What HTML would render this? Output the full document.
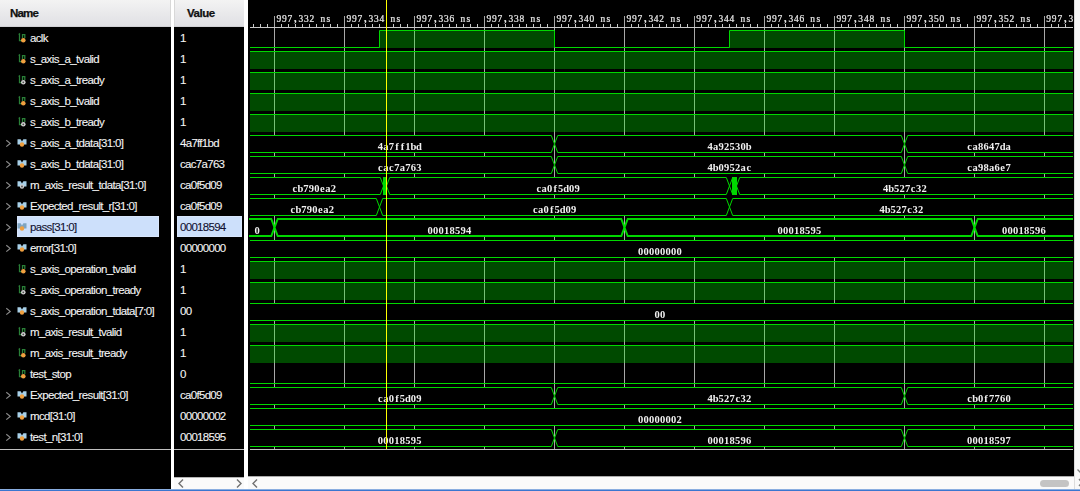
<!DOCTYPE html>
<html><head><meta charset="utf-8"><style>
html,body{margin:0;padding:0;}
body{width:1080px;height:491px;background:#000;position:relative;overflow:hidden;font-family:"Liberation Sans",sans-serif;}
.abs{position:absolute;}
.hdr{position:absolute;top:0;height:26px;background:linear-gradient(#f3f3f3,#e0e0e4);border-bottom:1px solid #d0d0d4;}
.hdr span{position:absolute;top:7px;font-weight:bold;font-size:11.5px;letter-spacing:-0.5px;color:#101010;-webkit-text-stroke:0.25px #101010;}
.sep{position:absolute;top:0;}
.nm{position:absolute;left:30px;height:21px;line-height:21px;font-size:11.5px;letter-spacing:-0.64px;color:#f4f4f4;white-space:nowrap;-webkit-text-stroke:0.1px #f4f4f4;}
.nm.sel{color:#101030;-webkit-text-stroke:0.1px #101030;}
.vl{position:absolute;left:180px;height:21px;line-height:21px;font-size:11.5px;letter-spacing:-0.7px;color:#f4f4f4;white-space:nowrap;-webkit-text-stroke:0.1px #f4f4f4;}
.vl.vsel{color:#101030;-webkit-text-stroke:0.1px #101030;}
.ic{position:absolute;}
.sbox{position:absolute;background:#cde0fb;box-sizing:border-box;border:1px solid #d8e6fc;}
svg.wave{position:absolute;left:0;top:0;will-change:transform;}
.tl{font-family:"Liberation Serif",serif;font-size:10.5px;fill:#e8e8e8;stroke:#e8e8e8;stroke-width:0.25px;}
.tlc{font-family:"Liberation Serif",serif;font-weight:bold;font-size:12px;fill:#e8e8e8;}
.bv{font-family:"Liberation Serif",serif;font-weight:bold;font-size:10.5px;fill:#f0f0f0;}
.scroll{position:absolute;background:#f5f5f5;}
.arr{position:absolute;}
</style></head><body>
<div class="hdr" style="left:0;width:171px;box-shadow:inset -1px 0 0 #d8d8d8"><span style="left:10px;letter-spacing:-0.8px">Name</span></div>
<div class="hdr" style="left:174px;width:70px;box-shadow:inset 1px 0 0 #d8d8d8"><span style="left:13px">Value</span></div>
<div class="sep" style="left:171px;width:3px;height:489px;background:#fff"></div>
<div class="sep" style="left:244px;width:4px;height:489px;background:#fff"></div>
<div class="sbox" style="left:17px;top:216px;width:142px;height:21px"></div><div class="sbox" style="left:177px;top:216px;width:65px;height:21px"></div>
<svg class="ic" style="left:16px;top:31px" width="12" height="12" viewBox="0 0 12 12"><path d="M2.6,3.6 L3.5,3 V9.5 H5.5 M6.5,7 V3.5 H8.8 V7" stroke="#2a8038" stroke-width="1.25" fill="none"/><circle cx="7.3" cy="9.3" r="2.3" fill="#f0a040"/></svg><div class="nm" style="top:28px">aclk</div><svg class="ic" style="left:16px;top:52px" width="12" height="12" viewBox="0 0 12 12"><path d="M2.6,3.6 L3.5,3 V9.5 H5.5 M6.5,7 V3.5 H8.8 V7" stroke="#2a8038" stroke-width="1.25" fill="none"/><circle cx="7.3" cy="9.3" r="2.3" fill="#f0a040"/></svg><div class="nm" style="top:49px">s_axis_a_tvalid</div><svg class="ic" style="left:16px;top:73px" width="12" height="12" viewBox="0 0 12 12"><path d="M2.6,3.6 L3.5,3 V9.5 H5.5 M6.5,7 V3.5 H8.8 V7" stroke="#2a8038" stroke-width="1.25" fill="none"/><circle cx="7.3" cy="9.3" r="2.3" fill="#d0d0d0"/><circle cx="7.3" cy="9.3" r="0.9" fill="#505050"/></svg><div class="nm" style="top:70px">s_axis_a_tready</div><svg class="ic" style="left:16px;top:94px" width="12" height="12" viewBox="0 0 12 12"><path d="M2.6,3.6 L3.5,3 V9.5 H5.5 M6.5,7 V3.5 H8.8 V7" stroke="#2a8038" stroke-width="1.25" fill="none"/><circle cx="7.3" cy="9.3" r="2.3" fill="#f0a040"/></svg><div class="nm" style="top:91px">s_axis_b_tvalid</div><svg class="ic" style="left:16px;top:115px" width="12" height="12" viewBox="0 0 12 12"><path d="M2.6,3.6 L3.5,3 V9.5 H5.5 M6.5,7 V3.5 H8.8 V7" stroke="#2a8038" stroke-width="1.25" fill="none"/><circle cx="7.3" cy="9.3" r="2.3" fill="#d0d0d0"/><circle cx="7.3" cy="9.3" r="0.9" fill="#505050"/></svg><div class="nm" style="top:112px">s_axis_b_tready</div><svg class="ic" style="left:16px;top:139px" width="12" height="9" viewBox="0 0 12 9"><path d="M1.5,0.3 H4.6 L6,2.6 L7.4,0.3 H10.5 V5.6 H1.5 Z" fill="#a8d0e8"/><circle cx="6" cy="5.5" r="2.2" fill="#f0a040"/></svg><svg class="ic" style="left:4px;top:139px" width="8" height="9" viewBox="0 0 8 9"><path d="M2.3,1.2 L6.2,4.4 L2.3,7.6" stroke="#8a8a8a" stroke-width="1.2" fill="none"/></svg><div class="nm" style="top:133px">s_axis_a_tdata[31:0]</div><svg class="ic" style="left:16px;top:160px" width="12" height="9" viewBox="0 0 12 9"><path d="M1.5,0.3 H4.6 L6,2.6 L7.4,0.3 H10.5 V5.6 H1.5 Z" fill="#a8d0e8"/><circle cx="6" cy="5.5" r="2.2" fill="#f0a040"/></svg><svg class="ic" style="left:4px;top:160px" width="8" height="9" viewBox="0 0 8 9"><path d="M2.3,1.2 L6.2,4.4 L2.3,7.6" stroke="#8a8a8a" stroke-width="1.2" fill="none"/></svg><div class="nm" style="top:154px">s_axis_b_tdata[31:0]</div><svg class="ic" style="left:16px;top:181px" width="12" height="9" viewBox="0 0 12 9"><path d="M1.5,0.3 H4.6 L6,2.6 L7.4,0.3 H10.5 V5.6 H1.5 Z" fill="#a8d0e8"/><circle cx="6" cy="5.5" r="2.2" fill="#d0d0d0"/><circle cx="6" cy="5.5" r="0.9" fill="#505050"/></svg><svg class="ic" style="left:4px;top:181px" width="8" height="9" viewBox="0 0 8 9"><path d="M2.3,1.2 L6.2,4.4 L2.3,7.6" stroke="#8a8a8a" stroke-width="1.2" fill="none"/></svg><div class="nm" style="top:175px">m_axis_result_tdata[31:0]</div><svg class="ic" style="left:16px;top:202px" width="12" height="9" viewBox="0 0 12 9"><path d="M1.5,0.3 H4.6 L6,2.6 L7.4,0.3 H10.5 V5.6 H1.5 Z" fill="#a8d0e8"/><circle cx="6" cy="5.5" r="2.2" fill="#f0a040"/></svg><svg class="ic" style="left:4px;top:202px" width="8" height="9" viewBox="0 0 8 9"><path d="M2.3,1.2 L6.2,4.4 L2.3,7.6" stroke="#8a8a8a" stroke-width="1.2" fill="none"/></svg><div class="nm" style="top:196px">Expected_result_r[31:0]</div><svg class="ic" style="left:16px;top:223px" width="12" height="9" viewBox="0 0 12 9"><path d="M1.5,0.3 H4.6 L6,2.6 L7.4,0.3 H10.5 V5.6 H1.5 Z" fill="#7ea4c0"/><circle cx="6" cy="5.5" r="2.2" fill="#f0a040"/></svg><svg class="ic" style="left:4px;top:223px" width="8" height="9" viewBox="0 0 8 9"><path d="M2.3,1.2 L6.2,4.4 L2.3,7.6" stroke="#8a8a8a" stroke-width="1.2" fill="none"/></svg><div class="nm sel" style="top:217px">pass[31:0]</div><svg class="ic" style="left:16px;top:244px" width="12" height="9" viewBox="0 0 12 9"><path d="M1.5,0.3 H4.6 L6,2.6 L7.4,0.3 H10.5 V5.6 H1.5 Z" fill="#a8d0e8"/><circle cx="6" cy="5.5" r="2.2" fill="#f0a040"/></svg><svg class="ic" style="left:4px;top:244px" width="8" height="9" viewBox="0 0 8 9"><path d="M2.3,1.2 L6.2,4.4 L2.3,7.6" stroke="#8a8a8a" stroke-width="1.2" fill="none"/></svg><div class="nm" style="top:238px">error[31:0]</div><svg class="ic" style="left:16px;top:262px" width="12" height="12" viewBox="0 0 12 12"><path d="M2.6,3.6 L3.5,3 V9.5 H5.5 M6.5,7 V3.5 H8.8 V7" stroke="#2a8038" stroke-width="1.25" fill="none"/><circle cx="7.3" cy="9.3" r="2.3" fill="#f0a040"/></svg><div class="nm" style="top:259px">s_axis_operation_tvalid</div><svg class="ic" style="left:16px;top:283px" width="12" height="12" viewBox="0 0 12 12"><path d="M2.6,3.6 L3.5,3 V9.5 H5.5 M6.5,7 V3.5 H8.8 V7" stroke="#2a8038" stroke-width="1.25" fill="none"/><circle cx="7.3" cy="9.3" r="2.3" fill="#d0d0d0"/><circle cx="7.3" cy="9.3" r="0.9" fill="#505050"/></svg><div class="nm" style="top:280px">s_axis_operation_tready</div><svg class="ic" style="left:16px;top:307px" width="12" height="9" viewBox="0 0 12 9"><path d="M1.5,0.3 H4.6 L6,2.6 L7.4,0.3 H10.5 V5.6 H1.5 Z" fill="#a8d0e8"/><circle cx="6" cy="5.5" r="2.2" fill="#f0a040"/></svg><svg class="ic" style="left:4px;top:307px" width="8" height="9" viewBox="0 0 8 9"><path d="M2.3,1.2 L6.2,4.4 L2.3,7.6" stroke="#8a8a8a" stroke-width="1.2" fill="none"/></svg><div class="nm" style="top:301px">s_axis_operation_tdata[7:0]</div><svg class="ic" style="left:16px;top:325px" width="12" height="12" viewBox="0 0 12 12"><path d="M2.6,3.6 L3.5,3 V9.5 H5.5 M6.5,7 V3.5 H8.8 V7" stroke="#2a8038" stroke-width="1.25" fill="none"/><circle cx="7.3" cy="9.3" r="2.3" fill="#d0d0d0"/><circle cx="7.3" cy="9.3" r="0.9" fill="#505050"/></svg><div class="nm" style="top:322px">m_axis_result_tvalid</div><svg class="ic" style="left:16px;top:346px" width="12" height="12" viewBox="0 0 12 12"><path d="M2.6,3.6 L3.5,3 V9.5 H5.5 M6.5,7 V3.5 H8.8 V7" stroke="#2a8038" stroke-width="1.25" fill="none"/><circle cx="7.3" cy="9.3" r="2.3" fill="#f0a040"/></svg><div class="nm" style="top:343px">m_axis_result_tready</div><svg class="ic" style="left:16px;top:367px" width="12" height="12" viewBox="0 0 12 12"><path d="M2.6,3.6 L3.5,3 V9.5 H5.5 M6.5,7 V3.5 H8.8 V7" stroke="#2a8038" stroke-width="1.25" fill="none"/><circle cx="7.3" cy="9.3" r="2.3" fill="#f0a040"/></svg><div class="nm" style="top:364px">test_stop</div><svg class="ic" style="left:16px;top:391px" width="12" height="9" viewBox="0 0 12 9"><path d="M1.5,0.3 H4.6 L6,2.6 L7.4,0.3 H10.5 V5.6 H1.5 Z" fill="#a8d0e8"/><circle cx="6" cy="5.5" r="2.2" fill="#f0a040"/></svg><svg class="ic" style="left:4px;top:391px" width="8" height="9" viewBox="0 0 8 9"><path d="M2.3,1.2 L6.2,4.4 L2.3,7.6" stroke="#8a8a8a" stroke-width="1.2" fill="none"/></svg><div class="nm" style="top:385px">Expected_result[31:0]</div><svg class="ic" style="left:16px;top:412px" width="12" height="9" viewBox="0 0 12 9"><path d="M1.5,0.3 H4.6 L6,2.6 L7.4,0.3 H10.5 V5.6 H1.5 Z" fill="#a8d0e8"/><circle cx="6" cy="5.5" r="2.2" fill="#f0a040"/></svg><svg class="ic" style="left:4px;top:412px" width="8" height="9" viewBox="0 0 8 9"><path d="M2.3,1.2 L6.2,4.4 L2.3,7.6" stroke="#8a8a8a" stroke-width="1.2" fill="none"/></svg><div class="nm" style="top:406px">mcd[31:0]</div><svg class="ic" style="left:16px;top:433px" width="12" height="9" viewBox="0 0 12 9"><path d="M1.5,0.3 H4.6 L6,2.6 L7.4,0.3 H10.5 V5.6 H1.5 Z" fill="#a8d0e8"/><circle cx="6" cy="5.5" r="2.2" fill="#f0a040"/></svg><svg class="ic" style="left:4px;top:433px" width="8" height="9" viewBox="0 0 8 9"><path d="M2.3,1.2 L6.2,4.4 L2.3,7.6" stroke="#8a8a8a" stroke-width="1.2" fill="none"/></svg><div class="nm" style="top:427px">test_n[31:0]</div>
<div class="vl" style="top:28px">1</div><div class="vl" style="top:49px">1</div><div class="vl" style="top:70px">1</div><div class="vl" style="top:91px">1</div><div class="vl" style="top:112px">1</div><div class="vl" style="top:133px">4a7ff1bd</div><div class="vl" style="top:154px">cac7a763</div><div class="vl" style="top:175px">ca0f5d09</div><div class="vl" style="top:196px">ca0f5d09</div><div class="vl vsel" style="top:217px">00018594</div><div class="vl" style="top:238px">00000000</div><div class="vl" style="top:259px">1</div><div class="vl" style="top:280px">1</div><div class="vl" style="top:301px">00</div><div class="vl" style="top:322px">1</div><div class="vl" style="top:343px">1</div><div class="vl" style="top:364px">0</div><div class="vl" style="top:385px">ca0f5d09</div><div class="vl" style="top:406px">00000002</div><div class="vl" style="top:427px">00018595</div>
<svg class="wave" width="1080" height="491" viewBox="0 0 1080 491">
<rect x="274" y="16" width="1" height="434" fill="#a8a8a8"/><rect x="344" y="16" width="1" height="434" fill="#a8a8a8"/><rect x="414" y="16" width="1" height="434" fill="#a8a8a8"/><rect x="484" y="16" width="1" height="434" fill="#a8a8a8"/><rect x="554" y="16" width="1" height="434" fill="#a8a8a8"/><rect x="624" y="16" width="1" height="434" fill="#a8a8a8"/><rect x="694" y="16" width="1" height="434" fill="#a8a8a8"/><rect x="764" y="16" width="1" height="434" fill="#a8a8a8"/><rect x="834" y="16" width="1" height="434" fill="#a8a8a8"/><rect x="904" y="16" width="1" height="434" fill="#a8a8a8"/><rect x="974" y="16" width="1" height="434" fill="#a8a8a8"/><rect x="1044" y="16" width="1" height="434" fill="#a8a8a8"/><rect x="250" y="27" width="823" height="1" fill="#c8c8c8"/><rect x="253" y="24" width="1" height="3" fill="#c8c8c8"/><rect x="260" y="24" width="1" height="3" fill="#c8c8c8"/><rect x="267" y="24" width="1" height="3" fill="#c8c8c8"/><rect x="281" y="24" width="1" height="3" fill="#c8c8c8"/><rect x="288" y="24" width="1" height="3" fill="#c8c8c8"/><rect x="295" y="24" width="1" height="3" fill="#c8c8c8"/><rect x="302" y="24" width="1" height="3" fill="#c8c8c8"/><rect x="309" y="24" width="1" height="3" fill="#c8c8c8"/><rect x="316" y="24" width="1" height="3" fill="#c8c8c8"/><rect x="323" y="24" width="1" height="3" fill="#c8c8c8"/><rect x="330" y="24" width="1" height="3" fill="#c8c8c8"/><rect x="337" y="24" width="1" height="3" fill="#c8c8c8"/><rect x="351" y="24" width="1" height="3" fill="#c8c8c8"/><rect x="358" y="24" width="1" height="3" fill="#c8c8c8"/><rect x="365" y="24" width="1" height="3" fill="#c8c8c8"/><rect x="372" y="24" width="1" height="3" fill="#c8c8c8"/><rect x="379" y="24" width="1" height="3" fill="#c8c8c8"/><rect x="386" y="24" width="1" height="3" fill="#c8c8c8"/><rect x="393" y="24" width="1" height="3" fill="#c8c8c8"/><rect x="400" y="24" width="1" height="3" fill="#c8c8c8"/><rect x="407" y="24" width="1" height="3" fill="#c8c8c8"/><rect x="421" y="24" width="1" height="3" fill="#c8c8c8"/><rect x="428" y="24" width="1" height="3" fill="#c8c8c8"/><rect x="435" y="24" width="1" height="3" fill="#c8c8c8"/><rect x="442" y="24" width="1" height="3" fill="#c8c8c8"/><rect x="449" y="24" width="1" height="3" fill="#c8c8c8"/><rect x="456" y="24" width="1" height="3" fill="#c8c8c8"/><rect x="463" y="24" width="1" height="3" fill="#c8c8c8"/><rect x="470" y="24" width="1" height="3" fill="#c8c8c8"/><rect x="477" y="24" width="1" height="3" fill="#c8c8c8"/><rect x="491" y="24" width="1" height="3" fill="#c8c8c8"/><rect x="498" y="24" width="1" height="3" fill="#c8c8c8"/><rect x="505" y="24" width="1" height="3" fill="#c8c8c8"/><rect x="512" y="24" width="1" height="3" fill="#c8c8c8"/><rect x="519" y="24" width="1" height="3" fill="#c8c8c8"/><rect x="526" y="24" width="1" height="3" fill="#c8c8c8"/><rect x="533" y="24" width="1" height="3" fill="#c8c8c8"/><rect x="540" y="24" width="1" height="3" fill="#c8c8c8"/><rect x="547" y="24" width="1" height="3" fill="#c8c8c8"/><rect x="561" y="24" width="1" height="3" fill="#c8c8c8"/><rect x="568" y="24" width="1" height="3" fill="#c8c8c8"/><rect x="575" y="24" width="1" height="3" fill="#c8c8c8"/><rect x="582" y="24" width="1" height="3" fill="#c8c8c8"/><rect x="589" y="24" width="1" height="3" fill="#c8c8c8"/><rect x="596" y="24" width="1" height="3" fill="#c8c8c8"/><rect x="603" y="24" width="1" height="3" fill="#c8c8c8"/><rect x="610" y="24" width="1" height="3" fill="#c8c8c8"/><rect x="617" y="24" width="1" height="3" fill="#c8c8c8"/><rect x="631" y="24" width="1" height="3" fill="#c8c8c8"/><rect x="638" y="24" width="1" height="3" fill="#c8c8c8"/><rect x="645" y="24" width="1" height="3" fill="#c8c8c8"/><rect x="652" y="24" width="1" height="3" fill="#c8c8c8"/><rect x="659" y="24" width="1" height="3" fill="#c8c8c8"/><rect x="666" y="24" width="1" height="3" fill="#c8c8c8"/><rect x="673" y="24" width="1" height="3" fill="#c8c8c8"/><rect x="680" y="24" width="1" height="3" fill="#c8c8c8"/><rect x="687" y="24" width="1" height="3" fill="#c8c8c8"/><rect x="701" y="24" width="1" height="3" fill="#c8c8c8"/><rect x="708" y="24" width="1" height="3" fill="#c8c8c8"/><rect x="715" y="24" width="1" height="3" fill="#c8c8c8"/><rect x="722" y="24" width="1" height="3" fill="#c8c8c8"/><rect x="729" y="24" width="1" height="3" fill="#c8c8c8"/><rect x="736" y="24" width="1" height="3" fill="#c8c8c8"/><rect x="743" y="24" width="1" height="3" fill="#c8c8c8"/><rect x="750" y="24" width="1" height="3" fill="#c8c8c8"/><rect x="757" y="24" width="1" height="3" fill="#c8c8c8"/><rect x="771" y="24" width="1" height="3" fill="#c8c8c8"/><rect x="778" y="24" width="1" height="3" fill="#c8c8c8"/><rect x="785" y="24" width="1" height="3" fill="#c8c8c8"/><rect x="792" y="24" width="1" height="3" fill="#c8c8c8"/><rect x="799" y="24" width="1" height="3" fill="#c8c8c8"/><rect x="806" y="24" width="1" height="3" fill="#c8c8c8"/><rect x="813" y="24" width="1" height="3" fill="#c8c8c8"/><rect x="820" y="24" width="1" height="3" fill="#c8c8c8"/><rect x="827" y="24" width="1" height="3" fill="#c8c8c8"/><rect x="841" y="24" width="1" height="3" fill="#c8c8c8"/><rect x="848" y="24" width="1" height="3" fill="#c8c8c8"/><rect x="855" y="24" width="1" height="3" fill="#c8c8c8"/><rect x="862" y="24" width="1" height="3" fill="#c8c8c8"/><rect x="869" y="24" width="1" height="3" fill="#c8c8c8"/><rect x="876" y="24" width="1" height="3" fill="#c8c8c8"/><rect x="883" y="24" width="1" height="3" fill="#c8c8c8"/><rect x="890" y="24" width="1" height="3" fill="#c8c8c8"/><rect x="897" y="24" width="1" height="3" fill="#c8c8c8"/><rect x="911" y="24" width="1" height="3" fill="#c8c8c8"/><rect x="918" y="24" width="1" height="3" fill="#c8c8c8"/><rect x="925" y="24" width="1" height="3" fill="#c8c8c8"/><rect x="932" y="24" width="1" height="3" fill="#c8c8c8"/><rect x="939" y="24" width="1" height="3" fill="#c8c8c8"/><rect x="946" y="24" width="1" height="3" fill="#c8c8c8"/><rect x="953" y="24" width="1" height="3" fill="#c8c8c8"/><rect x="960" y="24" width="1" height="3" fill="#c8c8c8"/><rect x="967" y="24" width="1" height="3" fill="#c8c8c8"/><rect x="981" y="24" width="1" height="3" fill="#c8c8c8"/><rect x="988" y="24" width="1" height="3" fill="#c8c8c8"/><rect x="995" y="24" width="1" height="3" fill="#c8c8c8"/><rect x="1002" y="24" width="1" height="3" fill="#c8c8c8"/><rect x="1009" y="24" width="1" height="3" fill="#c8c8c8"/><rect x="1016" y="24" width="1" height="3" fill="#c8c8c8"/><rect x="1023" y="24" width="1" height="3" fill="#c8c8c8"/><rect x="1030" y="24" width="1" height="3" fill="#c8c8c8"/><rect x="1037" y="24" width="1" height="3" fill="#c8c8c8"/><rect x="1051" y="24" width="1" height="3" fill="#c8c8c8"/><rect x="1058" y="24" width="1" height="3" fill="#c8c8c8"/><rect x="1065" y="24" width="1" height="3" fill="#c8c8c8"/><text x="307.1 313.21 319.32 326.74 331.54 337.65 343.76 351.19 355.99 362.68" y="22" class="tl" transform="scale(0.9,1)">997 332 ns</text><text x="293.7" y="21.5" class="tlc">,</text><text x="384.88 390.99 397.1 404.52 409.32 415.43 421.54 428.97 433.76 440.46" y="22" class="tl" transform="scale(0.9,1)">997 334 ns</text><text x="363.7" y="21.5" class="tlc">,</text><text x="462.65 468.76 474.88 482.3 487.1 493.21 499.32 506.74 511.54 518.23" y="22" class="tl" transform="scale(0.9,1)">997 336 ns</text><text x="433.7" y="21.5" class="tlc">,</text><text x="540.43 546.54 552.65 560.08 564.88 570.99 577.1 584.52 589.32 596.01" y="22" class="tl" transform="scale(0.9,1)">997 338 ns</text><text x="503.7" y="21.5" class="tlc">,</text><text x="618.21 624.32 630.43 637.85 642.65 648.76 654.88 662.3 667.1 673.79" y="22" class="tl" transform="scale(0.9,1)">997 340 ns</text><text x="573.7" y="21.5" class="tlc">,</text><text x="695.99 702.1 708.21 715.63 720.43 726.54 732.65 740.08 744.88 751.57" y="22" class="tl" transform="scale(0.9,1)">997 342 ns</text><text x="643.7" y="21.5" class="tlc">,</text><text x="773.76 779.88 785.99 793.41 798.21 804.32 810.43 817.85 822.65 829.35" y="22" class="tl" transform="scale(0.9,1)">997 344 ns</text><text x="713.7" y="21.5" class="tlc">,</text><text x="851.54 857.65 863.76 871.19 875.99 882.1 888.21 895.63 900.43 907.12" y="22" class="tl" transform="scale(0.9,1)">997 346 ns</text><text x="783.7" y="21.5" class="tlc">,</text><text x="929.32 935.43 941.54 948.97 953.76 959.88 965.99 973.41 978.21 984.9" y="22" class="tl" transform="scale(0.9,1)">997 348 ns</text><text x="853.7" y="21.5" class="tlc">,</text><text x="1007.1 1013.21 1019.32 1026.74 1031.54 1037.65 1043.76 1051.19 1055.99 1062.68" y="22" class="tl" transform="scale(0.9,1)">997 350 ns</text><text x="923.7" y="21.5" class="tlc">,</text><text x="1084.88 1090.99 1097.1 1104.52 1109.32 1115.43 1121.54 1128.97 1133.76 1140.46" y="22" class="tl" transform="scale(0.9,1)">997 352 ns</text><text x="993.7" y="21.5" class="tlc">,</text><text x="1162.65 1168.76 1174.88 1182.3 1187.1 1193.21 1199.32 1206.74 1211.54 1218.23" y="22" class="tl" transform="scale(0.9,1)">997 354 ns</text><text x="1063.7" y="21.5" class="tlc">,</text><rect x="250" y="449" width="823" height="1" fill="#c0c0c0"/><rect x="379" y="31" width="175" height="17" fill="rgba(0,255,0,0.29)"/><rect x="729" y="31" width="175" height="17" fill="rgba(0,255,0,0.29)"/><path d="M250,47.5 L379.5,47.5 L379.5,30.5 L554.5,30.5 L554.5,47.5 L729.5,47.5 L729.5,30.5 L904.5,30.5 L904.5,47.5 L1073,47.5" stroke="#00d800" stroke-width="1" fill="none"/><rect x="250" y="52" width="823" height="17" fill="rgba(0,255,0,0.29)"/><path d="M250,51.5 L1073,51.5" stroke="#00d800" stroke-width="1" fill="none"/><rect x="250" y="73" width="823" height="17" fill="rgba(0,255,0,0.29)"/><path d="M250,72.5 L1073,72.5" stroke="#00d800" stroke-width="1" fill="none"/><rect x="250" y="94" width="823" height="17" fill="rgba(0,255,0,0.29)"/><path d="M250,93.5 L1073,93.5" stroke="#00d800" stroke-width="1" fill="none"/><rect x="250" y="115" width="823" height="17" fill="rgba(0,255,0,0.29)"/><path d="M250,114.5 L1073,114.5" stroke="#00d800" stroke-width="1" fill="none"/><rect x="250" y="262" width="823" height="17" fill="rgba(0,255,0,0.29)"/><path d="M250,261.5 L1073,261.5" stroke="#00d800" stroke-width="1" fill="none"/><rect x="250" y="283" width="823" height="17" fill="rgba(0,255,0,0.29)"/><path d="M250,282.5 L1073,282.5" stroke="#00d800" stroke-width="1" fill="none"/><rect x="250" y="325" width="823" height="17" fill="rgba(0,255,0,0.29)"/><path d="M250,324.5 L1073,324.5" stroke="#00d800" stroke-width="1" fill="none"/><rect x="250" y="346" width="823" height="17" fill="rgba(0,255,0,0.29)"/><path d="M250,345.5 L1073,345.5" stroke="#00d800" stroke-width="1" fill="none"/><path d="M250,383.5 L1073,383.5" stroke="#00d800" stroke-width="1" fill="none"/><path d="M250,135.5 L551.3,135.5 L554.5,144.0 L551.3,152.5 L250,152.5" fill="#000" stroke="#00d800" stroke-width="1"/><text x="377.77 383.27 388.77 395.15 400.65 405.27 410.48 415.98" y="150" class="bv">4a7ff1bd</text><path d="M554.5,144.0 L557.7,135.5 L901.3,135.5 L904.5,144.0 L901.3,152.5 L557.7,152.5 Z" fill="#000" stroke="#00d800" stroke-width="1"/><text x="707.62 713.12 718.62 724.12 729.62 735.12 740.62 745.83" y="150" class="bv">4a92530b</text><path d="M1073,135.5 L907.7,135.5 L904.5,144.0 L907.7,152.5 L1073,152.5" fill="#000" stroke="#00d800" stroke-width="1"/><text x="967.27 972.48 977.98 983.48 988.98 994.48 999.68 1005.48" y="150" class="bv">ca8647da</text><path d="M250,156.5 L551.3,156.5 L554.5,165.0 L551.3,173.5 L250,173.5" fill="#000" stroke="#00d800" stroke-width="1"/><text x="378.07 383.27 389.07 394.27 399.77 405.27 410.77 416.27" y="171" class="bv">cac7a763</text><path d="M554.5,165.0 L557.7,156.5 L901.3,156.5 L904.5,165.0 L901.3,173.5 L557.7,173.5 Z" fill="#000" stroke="#00d800" stroke-width="1"/><text x="707.62 712.83 718.62 724.12 729.62 735.12 740.62 746.42" y="171" class="bv">4b0952ac</text><path d="M1073,156.5 L907.7,156.5 L904.5,165.0 L907.7,173.5 L1073,173.5" fill="#000" stroke="#00d800" stroke-width="1"/><text x="967.27 972.48 977.98 983.48 988.98 994.48 1000.27 1005.48" y="171" class="bv">ca98a6e7</text><path d="M250,177.5 L380.3,177.5 L383.5,186.0 L380.3,194.5 L250,194.5" fill="#000" stroke="#00d800" stroke-width="1"/><text x="292.57 297.48 303.27 308.77 314.27 320.07 325.27 330.77" y="192" class="bv">cb790ea2</text><path d="M383.5,186.0 L386.7,177.5 L383.3,177.5 L386.5,186.0 L383.3,194.5 L386.7,194.5 Z" fill="#000" stroke="#00d800" stroke-width="1"/><text x="" y="192" class="bv"></text><path d="M386.5,186.0 L389.7,177.5 L726.3,177.5 L729.5,186.0 L726.3,194.5 L389.7,194.5 Z" fill="#000" stroke="#00d800" stroke-width="1"/><text x="536.42 541.62 547.12 553.5 558.12 563.33 569.12 574.62" y="192" class="bv">ca0f5d09</text><path d="M729.5,186.0 L732.7,177.5 L733.3,177.5 L736.5,186.0 L733.3,194.5 L732.7,194.5 Z" fill="#000" stroke="#00d800" stroke-width="1"/><text x="" y="192" class="bv"></text><path d="M1073,177.5 L739.7,177.5 L736.5,186.0 L739.7,194.5 L1073,194.5" fill="#000" stroke="#00d800" stroke-width="1"/><text x="882.98 888.18 893.98 899.48 904.98 910.77 915.98 921.48" y="192" class="bv">4b527c32</text><path d="M250,198.5 L376.3,198.5 L379.5,207.0 L376.3,215.5 L250,215.5" fill="#000" stroke="#00d800" stroke-width="1"/><text x="290.57 295.48 301.27 306.77 312.27 318.07 323.27 328.77" y="213" class="bv">cb790ea2</text><path d="M379.5,207.0 L382.7,198.5 L726.3,198.5 L729.5,207.0 L726.3,215.5 L382.7,215.5 Z" fill="#000" stroke="#00d800" stroke-width="1"/><text x="532.92 538.12 543.62 550.0 554.62 559.83 565.62 571.12" y="213" class="bv">ca0f5d09</text><path d="M1073,198.5 L732.7,198.5 L729.5,207.0 L732.7,215.5 L1073,215.5" fill="#000" stroke="#00d800" stroke-width="1"/><text x="879.48 884.68 890.48 895.98 901.48 907.27 912.48 917.98" y="213" class="bv">4b527c32</text><path d="M249,219 L271.3,219 L274.5,227.5 L271.3,236 L249,236" fill="#000" stroke="#00d800" stroke-width="2"/><text x="254.57" y="234" class="bv">0</text><path d="M274.5,227.5 L277.7,219 L621.3,219 L624.5,227.5 L621.3,236 L277.7,236 Z" fill="#000" stroke="#00d800" stroke-width="2"/><text x="427.62 433.12 438.62 444.12 449.62 455.12 460.62 466.12" y="234" class="bv">00018594</text><path d="M624.5,227.5 L627.7,219 L971.3,219 L974.5,227.5 L971.3,236 L627.7,236 Z" fill="#000" stroke="#00d800" stroke-width="2"/><text x="777.62 783.12 788.62 794.12 799.62 805.12 810.62 816.12" y="234" class="bv">00018595</text><path d="M1073,219 L977.7,219 L974.5,227.5 L977.7,236 L1073,236" fill="#000" stroke="#00d800" stroke-width="2"/><text x="1001.98 1007.48 1012.98 1018.48 1023.98 1029.47 1034.97 1040.47" y="234" class="bv">00018596</text><path d="M250,240.5 L1073,240.5 L1073,257.5 L250,257.5" fill="#000" stroke="none"/><path d="M250,240.5 L1073,240.5 M250,257.5 L1073,257.5" fill="none" stroke="#00d800" stroke-width="1"/><text x="638.12 643.62 649.12 654.62 660.12 665.62 671.12 676.62" y="255" class="bv">00000000</text><path d="M250,303.5 L1073,303.5 L1073,320.5 L250,320.5" fill="#000" stroke="none"/><path d="M250,303.5 L1073,303.5 M250,320.5 L1073,320.5" fill="none" stroke="#00d800" stroke-width="1"/><text x="654.62 660.12" y="318" class="bv">00</text><path d="M250,387.5 L551.3,387.5 L554.5,396.0 L551.3,404.5 L250,404.5" fill="#000" stroke="#00d800" stroke-width="1"/><text x="378.07 383.27 388.77 395.15 399.77 404.98 410.77 416.27" y="402" class="bv">ca0f5d09</text><path d="M554.5,396.0 L557.7,387.5 L901.3,387.5 L904.5,396.0 L901.3,404.5 L557.7,404.5 Z" fill="#000" stroke="#00d800" stroke-width="1"/><text x="707.62 712.83 718.62 724.12 729.62 735.42 740.62 746.12" y="402" class="bv">4b527c32</text><path d="M1073,387.5 L907.7,387.5 L904.5,396.0 L907.7,404.5 L1073,404.5" fill="#000" stroke="#00d800" stroke-width="1"/><text x="967.27 972.18 977.98 984.35 988.98 994.48 999.98 1005.48" y="402" class="bv">cb0f7760</text><path d="M250,408.5 L1073,408.5 L1073,425.5 L250,425.5" fill="#000" stroke="none"/><path d="M250,408.5 L1073,408.5 M250,425.5 L1073,425.5" fill="none" stroke="#00d800" stroke-width="1"/><text x="638.12 643.62 649.12 654.62 660.12 665.62 671.12 676.62" y="423" class="bv">00000002</text><path d="M250,429.5 L551.3,429.5 L554.5,438.0 L551.3,446.5 L250,446.5" fill="#000" stroke="#00d800" stroke-width="1"/><text x="377.77 383.27 388.77 394.27 399.77 405.27 410.77 416.27" y="444" class="bv">00018595</text><path d="M554.5,438.0 L557.7,429.5 L901.3,429.5 L904.5,438.0 L901.3,446.5 L557.7,446.5 Z" fill="#000" stroke="#00d800" stroke-width="1"/><text x="707.62 713.12 718.62 724.12 729.62 735.12 740.62 746.12" y="444" class="bv">00018596</text><path d="M1073,429.5 L907.7,429.5 L904.5,438.0 L907.7,446.5 L1073,446.5" fill="#000" stroke="#00d800" stroke-width="1"/><text x="966.98 972.48 977.98 983.48 988.98 994.48 999.98 1005.48" y="444" class="bv">00018597</text><rect x="383" y="177" width="3" height="18" fill="#00d800"/><rect x="732" y="177" width="5" height="18" fill="#00d800"/><rect x="386" y="0" width="1" height="449" fill="#ffff00"/>
</svg>
<div class="abs" style="left:0;top:449px;width:171px;height:1px;background:#c0c0c0"></div>
<div class="abs" style="left:174px;top:449px;width:70px;height:1px;background:#c0c0c0"></div>
<div class="scroll" style="left:174px;top:477px;width:70px;height:12px;background:#fafafa;border-top:1px solid #b4b4b4;box-sizing:border-box"></div>
<div class="scroll" style="left:248px;top:476px;width:832px;height:13px;background:#fafafa;border-top:1px solid #acacac;box-sizing:border-box"></div>
<div class="scroll" style="left:1074px;top:0;width:6px;height:489px;background:#f8f8f8;border-left:1px solid #dcdcdc;box-sizing:border-box"></div>
<svg class="arr" style="left:1074px;top:466px" width="6" height="22"><path d="M3.5,3.5 L6.5,6.5 L9.5,3.5" stroke="#808080" stroke-width="1.3" fill="none"/><path d="M5,13 L8,16.5 L5,20" stroke="#808080" stroke-width="1.3" fill="none"/></svg>
<div class="abs" style="left:1040px;top:480px;width:29px;height:7px;border-radius:4px;background:#c4c4c4"></div>
<svg class="arr" style="left:176px;top:478px" width="10" height="11"><path d="M7,1.5 L3,5.5 L7,9.5" stroke="#707070" stroke-width="1.4" fill="none"/></svg>
<svg class="arr" style="left:234px;top:478px" width="10" height="11"><path d="M3,1.5 L7,5.5 L3,9.5" stroke="#707070" stroke-width="1.4" fill="none"/></svg>
<svg class="arr" style="left:250px;top:478px" width="10" height="11"><path d="M7,1.5 L3,5.5 L7,9.5" stroke="#707070" stroke-width="1.4" fill="none"/></svg>
<div class="abs" style="left:0;top:489px;width:1080px;height:2px;background:linear-gradient(#8aaee0 0,#8aaee0 1px,#3a76d0 1px)"></div>
</body></html>
